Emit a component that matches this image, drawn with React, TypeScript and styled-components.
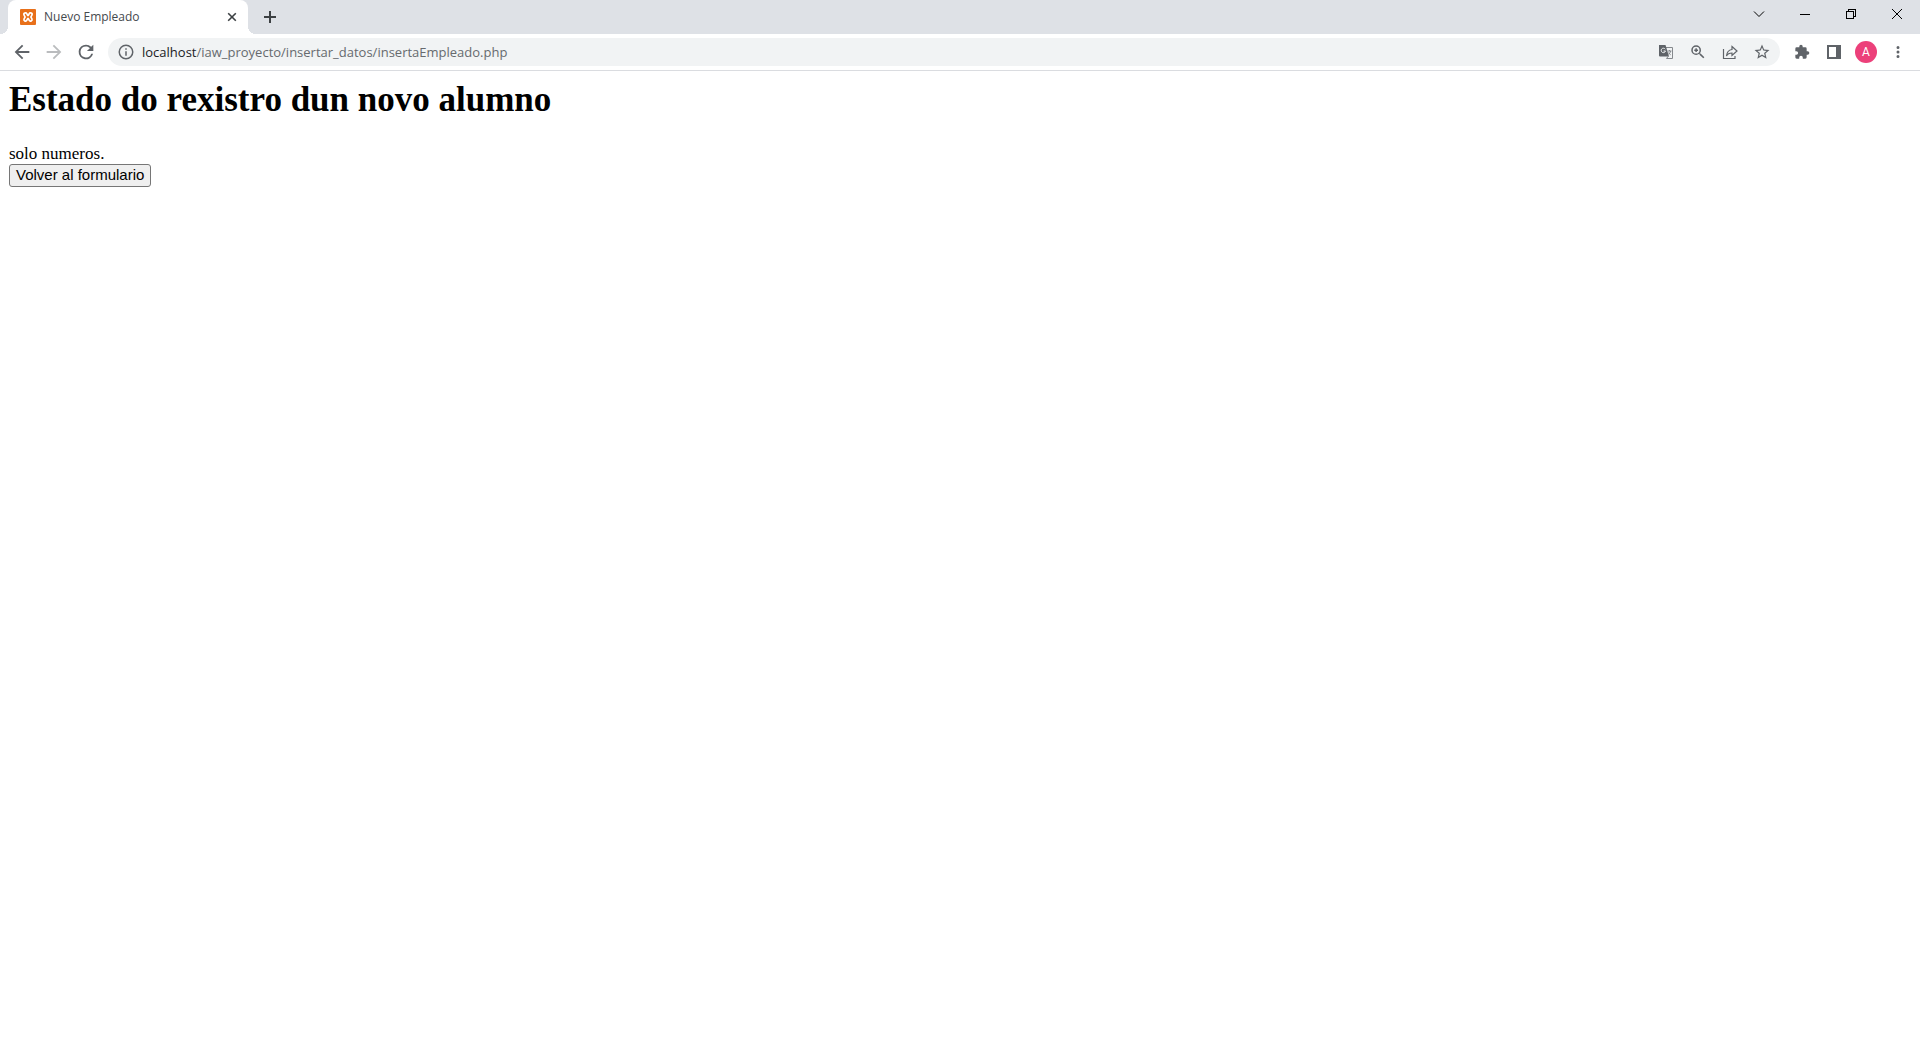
import React from "react";
import styled, { createGlobalStyle } from "styled-components";

const GlobalStyle = createGlobalStyle`
  body { margin: 0; background: #fff; }
  *, *::before, *::after { box-sizing: border-box; }
`;

const uiFont = `"Open Sans", "Noto Sans", sans-serif`;

const TabStrip = styled.header`
  display: flex;
  height: 34px;
  padding-left: 8px;
  background: #dee1e6;
  font-family: ${uiFont};
`;

const Tab = styled.div`
  position: relative;
  display: flex;
  align-items: center;
  gap: 8px;
  width: 240px;
  padding: 0 8px 0 12px;
  background: #fff;
  border-radius: 8px 8px 0 0;
  &::before, &::after {
    content: "";
    position: absolute;
    bottom: 0;
    width: 8px;
    height: 8px;
  }
  &::before {
    right: 100%;
    background: radial-gradient(circle at 0 0, transparent 8px, #fff 8px);
  }
  &::after {
    left: 100%;
    background: radial-gradient(circle at 100% 0, transparent 8px, #fff 8px);
  }
`;

const TabTitle = styled.span`
  flex: 1;
  font-size: 12px;
  line-height: 16px;
  color: #45494d;
`;

const IconButton = styled.button<{ $width: number; $height: number; $color?: string }>`
  display: flex;
  flex: none;
  align-items: center;
  justify-content: center;
  width: ${(p) => p.$width}px;
  height: ${(p) => p.$height}px;
  padding: 0;
  border: 0;
  background: none;
  color: ${(p) => p.$color ?? "#5f6368"};
`;

const NewTab = styled.div`
  display: flex;
  align-items: center;
  flex: 1;
  padding-left: 8px;
`;

const Toolbar = styled.nav`
  display: flex;
  align-items: center;
  gap: 6px;
  height: 37px;
  padding: 0 6px;
  border-bottom: 1px solid #dadce0;
  background: #fff;
  font-family: ${uiFont};
`;

const Group = styled.div`
  display: flex;
  flex: none;
`;

const Omnibox = styled.div`
  display: flex;
  align-items: center;
  flex: 1;
  min-width: 0;
  height: 28px;
  padding: 0 2px;
  border-radius: 14px;
  background: #f1f3f4;
  font-size: 13px;
  line-height: 20px;
`;

const Host = styled.label`
  color: #202124;
`;

const Path = styled.input`
  flex: 1;
  min-width: 0;
  padding: 0;
  border: 0;
  outline: 0;
  background: none;
  font: inherit;
  color: #666a6e;
`;

const Avatar = styled.span`
  width: 22px;
  height: 22px;
  border-radius: 50%;
  background: #ec407a;
  color: #fff;
  font-family: Roboto, sans-serif;
  font-size: 12px;
  line-height: 22px;
  text-align: center;
`;

const Page = styled.main`
  padding: 9px;
  font-family: "Liberation Serif", serif;
  color: #000;
`;

const Heading = styled.h1`
  margin: 0 0 24px;
  font-size: 35px;
  line-height: 40px;
`;

const Message = styled.p`
  margin: 0;
  font-size: 17px;
  line-height: 20px;
`;

const BackButton = styled.button`
  display: block;
  height: 23px;
  padding: 0 6px 2px;
  border: 1px solid #767676;
  border-radius: 3px;
  background: #efefef;
  color: #000;
  font-family: "Liberation Sans", sans-serif;
  font-size: 15px;
  line-height: 20px;
`;

const Glyph = ({ d, size = 18 }: { d: string; size?: number }) => (
  <svg width={size} height={size} viewBox="0 0 24 24" fill="currentColor" aria-hidden="true">
    <path d={d} />
  </svg>
);

const Line = ({ d, size, width = 1, crisp }: { d: string; size: number; width?: number; crisp?: boolean }) => (
  <svg
    width={size}
    height={size}
    viewBox={`0 0 ${size} ${size}`}
    fill="none"
    stroke="currentColor"
    strokeWidth={width}
    shapeRendering={crisp ? "crispEdges" : "auto"}
    aria-hidden="true"
  >
    <path d={d} />
  </svg>
);

const faviconMark = "M5.500 5.500L6.800 8 5.500 10.500M10.500 5.500L9.200 8l1.300 2.500M6.800 8h2.400";

const Favicon = () => (
  <svg width="16" height="16" viewBox="0 0 16 16" fill="none" strokeLinecap="round" strokeLinejoin="round" aria-hidden="true">
    <rect width="16" height="16" rx="1" fill="#e8701a" />
    <path d={faviconMark} stroke="#fff" strokeWidth="4.800" />
    <path d={faviconMark} stroke="#e8701a" strokeWidth="1.500" />
  </svg>
);

const TranslateIcon = () => (
  <svg width="16" height="16" viewBox="0 0 16 16" aria-hidden="true">
    <path d="M7 3.500h7.500v11H8.500" fill="#f1f3f4" stroke="#85898d" />
    <path d="M1 1h6.500l3.500 11.500H2a1 1 0 0 1-1-1z" fill="#5f6368" />
    <path d="M9.500 7h4M11.500 6v1M12.700 7c-.3 1.500-1.200 2.700-2.300 3.500M10.300 8.500c.6 1 1.400 1.700 2.400 2.300M8.500 14.500l2-2.500" fill="none" stroke="#85898d" />
    <path d="M7.200 5.200A2.200 2.200 0 1 0 7.500 7H5.500" fill="none" stroke="#f1f3f4" />
  </svg>
);

const navIcons = {
  back: "M20 11H7.830l5.590-5.590L12 4l-8 8 8 8 1.410-1.410L7.830 13H20v-2z",
  forward: "M12 4l-1.410 1.410L16.170 11H4v2h12.170l-5.580 5.590L12 20l8-8z",
  reload:
    "M17.650 6.350A7.958 7.958 0 0 0 12 4a8 8 0 1 0 7.730 10h-2.080A6 6 0 1 1 12 6c1.660 0 3.140.690 4.220 1.780L13 11h7V4l-2.350 2.350z",
  info: "M11 7h2v2h-2zm0 4h2v6h-2zm1-9a10 10 0 1 0 0 20 10 10 0 0 0 0-20zm0 18a8 8 0 1 1 0-16 8 8 0 0 1 0 16z",
  zoom: "M15.500 14h-.790l-.280-.270A6.471 6.471 0 0 0 16 9.500 6.500 6.500 0 1 0 9.500 16c1.610 0 3.090-.590 4.230-1.570l.270.280v.790l5 4.990L20.490 19l-4.990-5zm-6 0a4.500 4.500 0 1 1 0-9 4.500 4.500 0 0 1 0 9zM10.500 7h-2v1.500H7v2h1.500V12h2v-1.500H12v-2h-1.500z",
  star: "M22 9.240l-7.190-.620L12 2 9.190 8.630 2 9.240l5.460 4.730L5.820 21 12 17.270 18.180 21l-1.630-7.030L22 9.240zM12 15.400l-3.760 2.270 1-4.280-3.320-2.880 4.380-.380L12 6.100l1.710 4.040 4.380.380-3.320 2.880 1 4.280L12 15.400z",
  puzzle:
    "M20.500 11H19V7a2 2 0 0 0-2-2h-4V3.500a2.500 2.500 0 0 0-5 0V5H4a2 2 0 0 0-2 2v3.800h1.500a2.700 2.700 0 0 1 0 5.400H2V20a2 2 0 0 0 2 2h3.800v-1.500a2.700 2.700 0 0 1 5.400 0V22H17a2 2 0 0 0 2-2v-4h1.500a2.500 2.500 0 0 0 0-5z",
  more: "M12 8a2 2 0 1 0 0-4 2 2 0 0 0 0 4zm0 2a2 2 0 1 0 0 4 2 2 0 0 0 0-4zm0 6a2 2 0 1 0 0 4 2 2 0 0 0 0-4z",
};

const ToolButton = ({ label, color, children }: { label: string; color?: string; children: React.ReactNode }) => (
  <IconButton type="button" aria-label={label} $width={32} $height={28} $color={color}>
    {children}
  </IconButton>
);

const WindowButton = ({ label, children }: { label: string; children: React.ReactNode }) => (
  <IconButton type="button" aria-label={label} $width={46} $height={28} $color="#000">
    {children}
  </IconButton>
);

export default function App() {
  return (
    <>
      <GlobalStyle />
      <TabStrip>
        <Tab>
          <Favicon />
          <TabTitle>Nuevo Empleado</TabTitle>
          <IconButton type="button" aria-label="Cerrar pestaña" $width={16} $height={16} $color="#3c4043">
            <Line size={16} width={1.6} d="M4.200 4.200l7.600 7.600M11.800 4.200l-7.600 7.600" />
          </IconButton>
        </Tab>
        <NewTab>
          <IconButton type="button" aria-label="Nueva pestaña" $width={28} $height={28} $color="#3c4043">
            <Line size={16} width={2} d="M8 2v12M2 8h12" />
          </IconButton>
        </NewTab>
        <Group>
          <WindowButton label="Buscar pestañas">
            <Line size={12} d="M1 3.500l5 5 5-5" />
          </WindowButton>
          <WindowButton label="Minimizar">
            <Line size={10} crisp d="M0 5.500h10" />
          </WindowButton>
          <WindowButton label="Restaurar">
            <Line size={10} crisp d="M.5 2.500h7v7h-7zM2.500 2.500v-2h7v7h-2" />
          </WindowButton>
          <WindowButton label="Cerrar">
            <Line size={10} d="M0 0l10 10M10 0L0 10" />
          </WindowButton>
        </Group>
      </TabStrip>
      <Toolbar>
        <Group>
          <ToolButton label="Atrás"><Glyph size={22} d={navIcons.back} /></ToolButton>
          <ToolButton label="Adelante" color="#babcbe"><Glyph size={22} d={navIcons.forward} /></ToolButton>
          <ToolButton label="Recargar"><Glyph size={22} d={navIcons.reload} /></ToolButton>
        </Group>
        <Omnibox>
          <ToolButton label="Información del sitio"><Glyph size={18} d={navIcons.info} /></ToolButton>
          <Host htmlFor="address">localhost</Host>
          <Path id="address" type="text" spellCheck={false} defaultValue="/iaw_proyecto/insertar_datos/insertaEmpleado.php" />
          <ToolButton label="Traducir"><TranslateIcon /></ToolButton>
          <ToolButton label="Zoom"><Glyph d={navIcons.zoom} /></ToolButton>
          <ToolButton label="Compartir">
            <Line size={16} width={1.2} d="M1.500 5v9.500h11.500V12M10 2.500l5 4.500-5 4.500V9C7.500 9 5.500 10 4.500 12c.3-3.500 2-6 5.500-6.500z" />
          </ToolButton>
          <ToolButton label="Marcador"><Glyph d={navIcons.star} /></ToolButton>
        </Omnibox>
        <Group>
          <ToolButton label="Extensiones"><Glyph size={16} d={navIcons.puzzle} /></ToolButton>
          <ToolButton label="Panel lateral">
            <svg width="14" height="14" viewBox="0 0 14 14" aria-hidden="true">
              <path d="M0 0h14v14H0zM2 2v10h7V2z" fill="currentColor" fillRule="evenodd" />
            </svg>
          </ToolButton>
          <ToolButton label="Perfil"><Avatar>A</Avatar></ToolButton>
          <ToolButton label="Menú"><Glyph d={navIcons.more} /></ToolButton>
        </Group>
      </Toolbar>
      <Page>
        <Heading>Estado do rexistro dun novo alumno</Heading>
        <Message>solo numeros.</Message>
        <BackButton type="button">Volver al formulario</BackButton>
      </Page>
    </>
  );
}
